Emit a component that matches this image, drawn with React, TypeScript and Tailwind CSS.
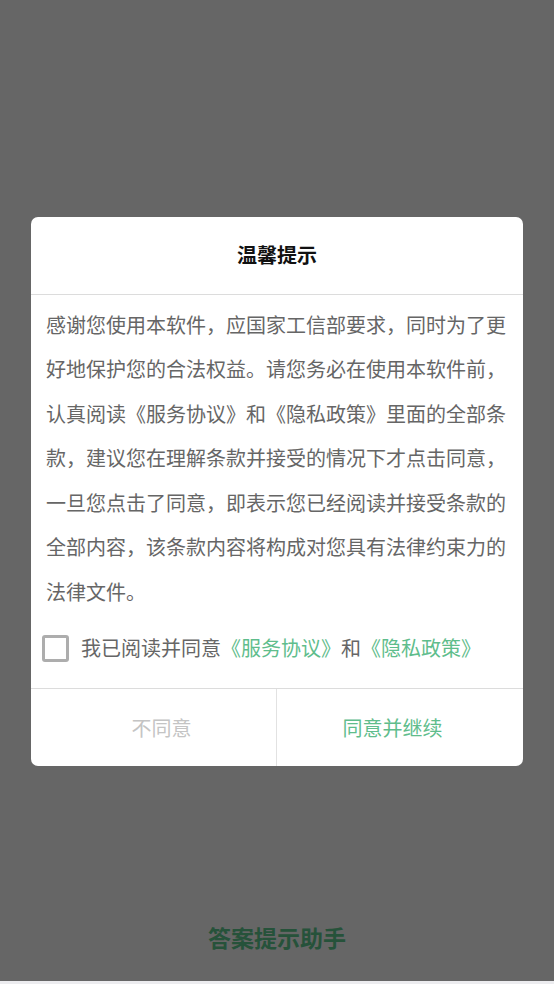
const cjk = { fontFamily: '"Noto Sans CJK SC", "Noto Sans", sans-serif' };

function AgreeLine() {
  return (
    <div className="flex items-center gap-[12px] px-[11px] pt-[20px] pb-[26px]">
      <span className="w-[27px] h-[27px] shrink-0 rounded-[3px] border-[3px] border-[#adadad] bg-white" />
      <p className="text-[20px] leading-[28px] text-[#666] whitespace-nowrap">
        我已阅读并同意
        <span className="text-[#5fbd8c]">《服务协议》</span>
        和
        <span className="text-[#5fbd8c]">《隐私政策》</span>
      </p>
    </div>
  );
}

function PrivacyDialog() {
  return (
    <div className="w-[492px] rounded-[7px] bg-white overflow-hidden">
      <div className="h-[78px] flex items-center justify-center border-b border-[#dcdcdc]">
        <h2 className="text-[20px] font-bold text-[#111]">温馨提示</h2>
      </div>

      <p className="px-[15px] pt-[8px] text-[20px] leading-[44.5px] text-[#666]">
        感谢您使用本软件，应国家工信部要求，同时为了更好地保护您的合法权益。请您务必在使用本软件前，认真阅读《服务协议》和《隐私政策》里面的全部条款，建议您在理解条款并接受的情况下才点击同意，一旦您点击了同意，即表示您已经阅读并接受条款的全部内容，该条款内容将构成对您具有法律约束力的法律文件。
      </p>

      <AgreeLine />

      <div className="grid grid-cols-2 h-[78px] border-t border-[#dcdcdc]">
        <button className="flex items-center justify-center pl-[16px] border-r border-[#e2e2e2] text-[20px] text-[#c4c4c4]">
          不同意
        </button>
        <button className="flex items-center justify-center pr-[15px] text-[20px] text-[#5fbd8c]">
          同意并继续
        </button>
      </div>
    </div>
  );
}

export default function App() {
  return (
    <div className="relative w-full h-[984px] bg-white flex flex-col" style={cjk}>
      {/* page under the dialog */}
      <div className="flex-1 flex flex-col justify-end items-center pb-[28px]">
        <h1 className="text-[23px] leading-[32px] font-bold text-[#5fcd92]">答案提示助手</h1>
      </div>
      <div className="h-[3px] bg-[#ececef]" />

      {/* overlay */}
      <div className="absolute inset-x-0 top-0 bottom-[3px] pt-[2px] bg-black/60 flex items-center justify-center">
        <PrivacyDialog />
      </div>
    </div>
  );
}
